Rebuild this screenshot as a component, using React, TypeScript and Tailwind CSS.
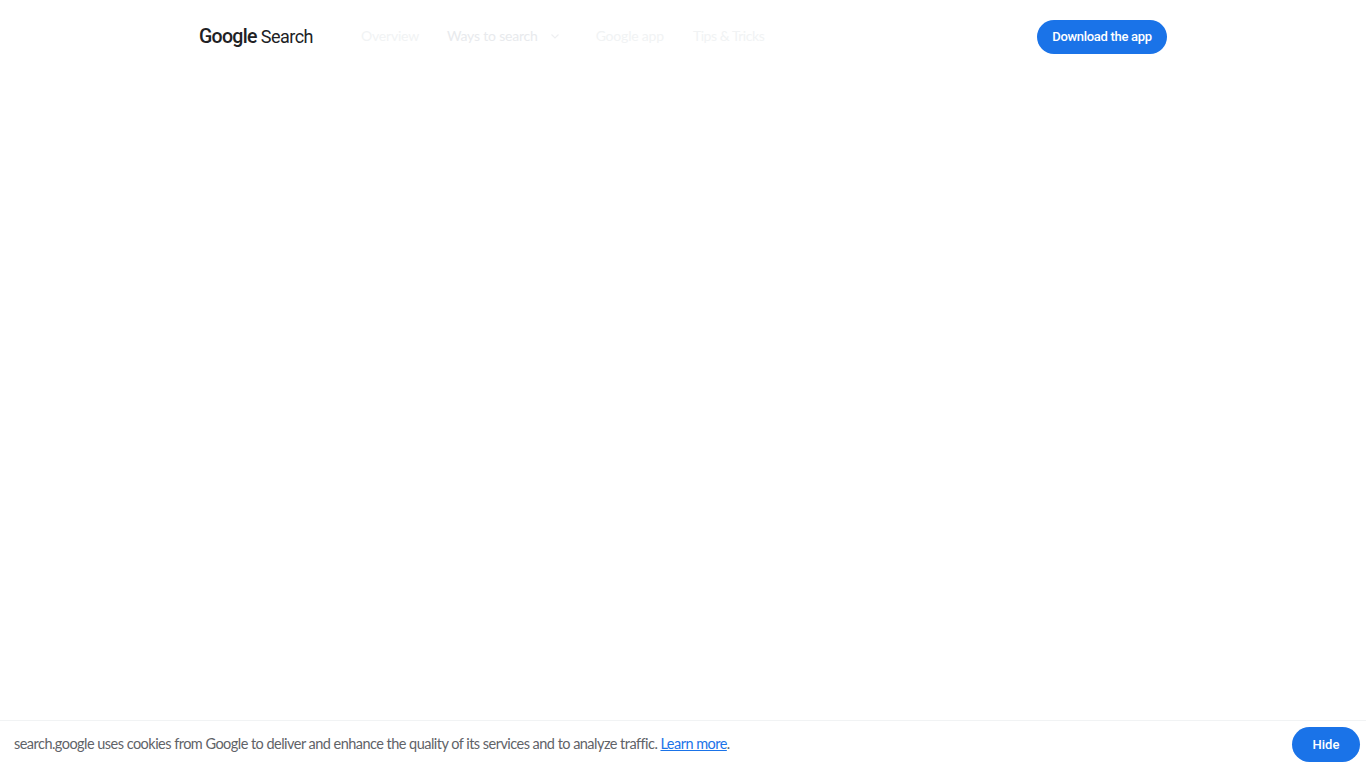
import React from 'react';

const App = () => {
    return (
        <div className="h-screen w-full flex flex-col bg-white overflow-hidden font-['Lato',sans-serif]">
            <header className="h-[73px] shrink-0 flex items-center justify-between px-[199px]">
                <div className="flex items-center">
                    <a className="flex items-center gap-[4px] w-[162px] text-[#202124] whitespace-nowrap font-['Roboto',sans-serif]">
                        <span className="text-[19.5px] font-medium tracking-[-0.7px]">Google</span>
                        <span className="text-[18px] font-normal tracking-[-0.5px]">Search</span>
                    </a>
                    <nav className="flex items-center pb-[2px] text-[14px] tracking-[-0.2px] whitespace-nowrap">
                        <a className="text-[#f1f3f4] mr-[28px]">Overview</a>
                        <a className="text-[#e8eaed] mr-[10px]">Ways to search</a>
                        <svg className="w-[14px] h-[14px] mr-[34px] text-[#eeeff1]" viewBox="0 0 14 14" fill="none" stroke="currentColor" strokeWidth="1.2">
                            <path d="M3.5 5.5 7 9l3.5-3.5" />
                        </svg>
                        <a className="text-[#f1f3f4] mr-[29px]">Google app</a>
                        <a className="text-[#f1f3f4] tracking-[-0.45px]">Tips &amp; Tricks</a>
                    </nav>
                </div>
                <button className="h-[34px] w-[130px] rounded-full bg-[#1a73e8] text-white text-[13px] font-medium tracking-[-0.3px] font-['Roboto',sans-serif]">
                    Download the app
                </button>
            </header>
            <main className="flex-1 bg-white" />
            <div className="h-[47px] shrink-0 flex items-center justify-between border-t border-[#f1f3f4] pl-[14px] pr-[6px] box-content">
                <p className="pb-[2px] text-[14.5px] tracking-[-0.53px] text-[#5f6368]">
                    search.google uses cookies from Google to deliver and enhance the quality of its services and to analyze traffic.{' '}
                    <a className="text-[#1a73e8] underline">Learn more</a>.
                </p>
                <button className="h-[35px] w-[68px] rounded-full bg-[#1a73e8] text-white text-[13px] font-medium font-['Roboto',sans-serif]">
                    Hide
                </button>
            </div>
        </div>
    );
};

export default App;
